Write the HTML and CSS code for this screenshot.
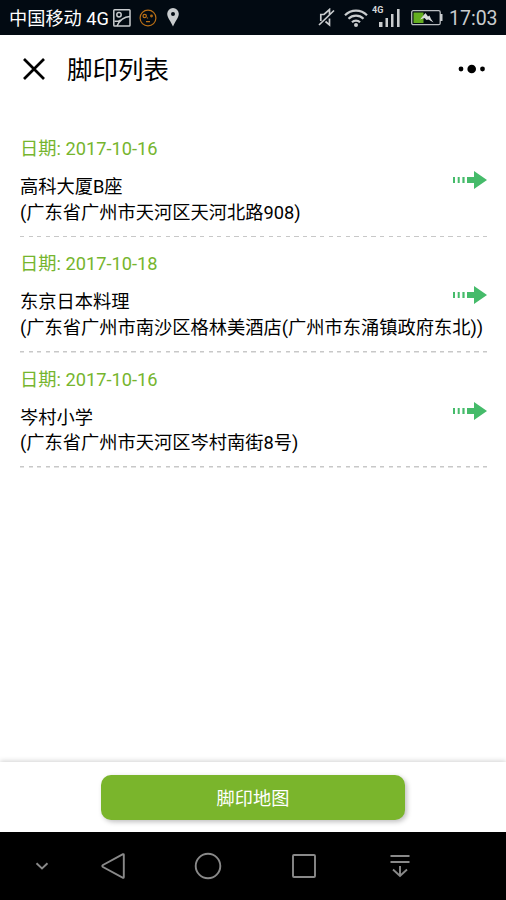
FILE: index.html
```html
<!DOCTYPE html>
<html lang="zh-CN">
<head>
<meta charset="utf-8">
<title>脚印列表</title>
<link rel="stylesheet" href="styles.css">
</head>
<body>
<svg width="0" height="0" class="defs">
  <symbol id="arrow" viewBox="0 0 34 18">
    <path d="M0 6h2v6H0zM4.700 6h2v6h-2zM9.400 6h2.200v6H9.400zM14 6h7V0l13 9-13 9v-6h-7z" fill="#45bb6a"/>
  </symbol>
</svg>
<div class="screen">
  <div class="status">
    <span class="carrier">中国移动 4G</span>
    <svg class="picture" width="18" height="18" viewBox="0 0 18 18" fill="none" stroke="#c9ccce" stroke-width="1.500"><rect x=".8" y=".8" width="16.200" height="16.200" rx=".8"/><circle cx="6" cy="5.800" r="2.200"/><path d="M1.500 12.200h4l2.300-1.200M4 17C6.500 11.500 10 8 17 7.500"/></svg>
    <svg class="face" width="18" height="18" viewBox="0 0 18 18" fill="none" stroke="#b96f16" stroke-width="1.200"><circle cx="9" cy="9" r="7.900"/><circle cx="5.700" cy="7" r="1.700"/><circle cx="12.500" cy="7" r=".8"/><path d="M7 12.700h4M8.500 8.500v1"/></svg>
    <svg class="pin" width="12" height="19" viewBox="0 0 12 19"><path fill="#c9ccce" fill-rule="evenodd" d="M6 0a5.800 5.800 0 0 1 5.800 5.800C11.800 10 8 13.500 6 18.500 4 13.500.2 10 .2 5.800A5.800 5.800 0 0 1 6 0zM6 4a2 2 0 1 0 0 4 2 2 0 0 0 0-4z"/></svg>
    <svg class="mute" width="17" height="19" viewBox="0 0 17 19" fill="none" stroke="#c9ccce" stroke-width="1.700"><path d="M2.800 13V6.500h3.200L11.500 1.500V7M11.500 10.500v6.500L7.500 13.500M1 17L16 2.500"/></svg>
    <svg class="wifi" width="24" height="18" viewBox="0 0 24 18" fill="none" stroke="#c9ccce" stroke-width="2.200"><path d="M1 6.200a15.500 15.500 0 0 1 22 0M4.500 9.800a10.600 10.600 0 0 1 15 0M8 13.200a5.700 5.700 0 0 1 8 0"/><circle cx="12" cy="16" r="2" fill="#c9ccce" stroke="none"/></svg>
    <span class="net">4G</span>
    <svg class="signal" width="21" height="18" viewBox="0 0 21 18" fill="#c9ccce"><path d="M0 13h3.500v5H0zM6.500 9h2.500v9H6.500zM12 5h2.500v13H12zM18 0h2.600v18H18z"/></svg>
    <svg class="battery" width="32" height="16" viewBox="0 0 32 16"><rect x=".7" y=".7" width="28.500" height="14" rx="1.500" fill="none" stroke="#b9bdc0" stroke-width="1.300"/><path d="M29 4h2.500v7H29z" fill="#c9ccce"/><path d="M2.500 2.500h10v10.500h-10z" fill="#64ae20"/><path d="M9 9.500L14.500 3l2.500 3.500 1.500-1 1.500 3.500 2.500 3.500-5-3-2 .5-2-2z" fill="#d9dcdc"/></svg>
    <span class="clock">17:03</span>
  </div>
  <header class="title-bar">
    <svg class="close" width="24" height="24" viewBox="0 0 24 24" stroke="#000" stroke-width="2.700"><path d="M2 2l20 20M22 2L2 22"/></svg>
    <h1>脚印列表</h1>
    <svg class="more" width="28" height="10" viewBox="0 0 28 10"><circle cx="3" cy="5" r="2.400"/><circle cx="13.700" cy="5" r="4.300"/><circle cx="24.500" cy="5" r="2.400"/></svg>
  </header>
  <main class="list">
    <article class="item">
      <div class="date">日期: 2017-10-16</div>
      <div class="place">高科大厦B座<br>(广东省广州市天河区天河北路908)</div>
      <svg class="arrow"><use href="#arrow"/></svg>
    </article>
    <article class="item">
      <div class="date">日期: 2017-10-18</div>
      <div class="place">东京日本料理<br>(广东省广州市南沙区格林美酒店(广州市东涌镇政府东北))</div>
      <svg class="arrow"><use href="#arrow"/></svg>
    </article>
    <article class="item">
      <div class="date">日期: 2017-10-16</div>
      <div class="place">岑村小学<br>(广东省广州市天河区岑村南街8号)</div>
      <svg class="arrow"><use href="#arrow"/></svg>
    </article>
  </main>
  <footer class="action"><button class="map-button">脚印地图</button></footer>
  <nav class="system-nav">
    <svg class="down" width="14" height="8" viewBox="0 0 14 8"><path d="M1.500 1.300L7 6.500l5.500-5.200"/></svg>
    <svg class="back" width="24" height="26" viewBox="0 0 24 26"><path d="M22 1.200L2 12q-1.400 1 0 2L22 24.800q.8.300.8-.8V2q0-1.100-.8-.8z"/></svg>
    <svg class="home" width="28" height="28" viewBox="0 0 28 28"><circle cx="14" cy="14" r="12.300"/></svg>
    <svg class="recent" width="24" height="24" viewBox="0 0 24 24"><rect x="1" y="1" width="22" height="22" rx="1"/></svg>
    <svg class="pull" width="20" height="24" viewBox="0 0 20 24"><path d="M.5 2h19M.5 8h19M10 12v10M3 15.500l7 6.500 7-6.500"/></svg>
  </nav>
</div>
</body>
</html>
```
FILE: styles.css
```css
* { box-sizing: border-box; }
body { margin: 0; background: #fff; color: #000; font-family: Roboto, "Noto Sans CJK SC", sans-serif; }
svg { display: block; flex: none; }
.defs { position: absolute; }
.screen { display: flex; flex-direction: column; width: 506px; height: 900px; overflow: hidden; }
.status { display: flex; align-items: center; flex: none; height: 35px; padding-left: 9px; background: #020a12; color: #fff; white-space: nowrap; }
.carrier { width: 104px; font-size: 18.200px; line-height: 35px; padding-top: 1px; }
.face { margin-left: 8px; }
.pin { margin-left: 10px; }
.mute { margin-left: 139px; }
.wifi { margin-left: 9px; }
.net { width: 12px; margin: 0 0 16px 4px; color: #d4d7d9; font-size: 9px; line-height: 10px; font-weight: 700; }
.signal { margin-left: -5px; }
.battery { margin-left: 11px; }
.clock { margin-left: 6px; padding-top: 2px; color: #c9ccce; font-size: 19.500px; line-height: 34px; }
.title-bar { display: flex; align-items: center; flex: none; height: 68px; padding: 0 20px 0 22px; }
.title-bar h1 { margin: 0 auto 0 21px; padding-top: 1px; font-size: 25.500px; line-height: 68px; font-weight: 400; }
.list { flex: 1; padding: 19px 19px 0 20px; }
.item { position: relative; height: 115.300px; padding-top: 14px; background: repeating-linear-gradient(90deg, #c8c8c8 0 4.300px, transparent 4.300px 8.570px) left bottom / 100% 1.500px no-repeat; }
.date { color: #76b52e; font-size: 18.250px; line-height: 25px; }
.place { margin-top: 13px; font-size: 18.250px; line-height: 25.500px; white-space: nowrap; }
.arrow { position: absolute; top: 49px; right: 0; width: 34px; height: 18px; }
.action { display: flex; justify-content: center; flex: none; height: 70px; padding-top: 13px; background: #fff; box-shadow: 0 -1px 5px rgba(0, 0, 0, .18); }
.map-button { width: 304px; height: 45px; padding: 2px 0 0; border: 0; border-radius: 10px; background: #7ab52c; box-shadow: 2px 2px 5px rgba(0, 0, 0, .25); color: #fff; font: 400 18.200px/43px Roboto, "Noto Sans CJK SC", sans-serif; }
.system-nav { position: relative; display: flex; align-items: center; flex: none; height: 68px; padding-left: 35px; background: #000; }
.system-nav svg { fill: none; stroke: #898989; stroke-width: 1.900; }
.back { margin-left: 52px; }
.home { margin-left: 69px; }
.recent { margin-left: 70px; }
.pull { margin-left: 74px; }
```
